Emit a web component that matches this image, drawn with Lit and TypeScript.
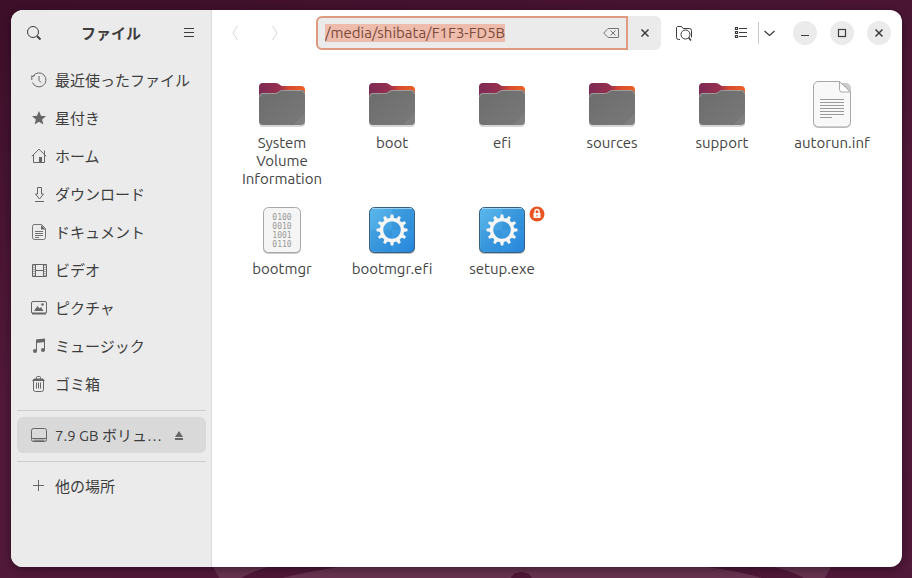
import { LitElement, html, svg, css } from "lit";
import { customElement, query } from "lit/decorators.js";

const icons = {
  search: svg`<circle cx="7" cy="7" r="5.500"/><path d="M11 11l3.500 3.500" stroke-width="1.800"/>`,
  menu: svg`<path d="M4 3.500h10M4 7.500h10M4 11.500h10" stroke-width="1.200"/>`,
  recent: svg`<path d="M2.200 3.900A7 7 0 1 1 1.500 10.600M.8 8V3.500M1 4.500l3-1"/><path d="M8 4v4.500l2 2"/>`,
  star: svg`<path class="solid" d="M8 1l2 4.800 5 .4-3.900 3.300 1.300 5.100L8 11.800l-4.400 2.800 1.300-5.100L1 6.200l5-.4z"/>`,
  home: svg`<path d="M.8 8.300L8 1.200l7.300 7.100M2.500 7v7.500h11V7M13.500 2.500v4"/><path class="solid" d="M8 9h3v5H8z"/>`,
  download: svg`<path d="M6.500 1.500h4v6.500h2L8.500 13 4.500 8h2zM4 15.500h9"/>`,
  document: svg`<path d="M3 .5h7.500l4 4v9a2 2 0 0 1-2 2H3.500a2 2 0 0 1-2-2V2.500A2 2 0 0 1 3 .5M4 7.500h8M4 9.500h8M4 11.500h8M4 13.500h4" stroke-width=".9"/><path class="solid" d="M10 1v4.500h4.500z"/>`,
  video: svg`<path d="M1.500 2.500h14v12h-14zM4.500 2.500v12M12.500 2.500v12M4.500 8.500h8"/><path d="M3 3v12M14 3v12" stroke-dasharray="1 1"/>`,
  picture: svg`<rect x=".5" y="1.500" width="15" height="12" rx="1.500"/><path class="solid" d="M3 11l3.500-5 2 2.500L10 7l2.500 4z"/><circle class="solid" cx="11.500" cy="4.500" r="1.300"/><path d="M1 13.500h14" stroke-width="2"/>`,
  music: svg`<path d="M5.500 13V2.500l8-1V11.500"/><path class="solid" d="M5 1.500L14 .5v3.500l-9 1z"/><circle class="solid" cx="4" cy="13" r="2"/><circle class="solid" cx="12" cy="12" r="2"/>`,
  trash: svg`<path d="M2.500 4.500v9a2 2 0 0 0 2 2h6a2 2 0 0 0 2-2v-9M5.500 6.500v6M7.500 6.500v6M9.500 6.500v6"/><path d="M5.500 3V1.500q0-1 1-1h2q1 0 1 1V3"/><path class="solid" d="M3 2.500h9l2 2.500H1z"/>`,
  drive: svg`<rect x=".5" y="1.500" width="15" height="13" rx="2"/><path d="M.5 11.500h15M2.500 13.200h11"/>`,
  plus: svg`<path d="M7.500 2v11M2 7.500h11"/>`,
  eject: svg`<path class="solid" d="M7 4l4 6H3zM3 11h8v2H3z"/>`,
  back: svg`<path d="M10.500 1L6 8l4.500 7"/>`,
  forward: svg`<path d="M5.500 1L10 8l-4.500 7"/>`,
  clear: svg`<path d="M5 3.500h10.500v9H5L.8 8zM7.500 5.500l5 5M12.500 5.500l-5 5"/>`,
  close: svg`<path d="M4.500 4.500l7 7M11.500 4.500l-7 7" stroke-width="1.500"/>`,
  folderSearch: svg`<path d="M4 14.500H2.500a2 2 0 0 1-2-2V2.500l1-1h4l1.500 2h6.500a2 2 0 0 1 2 2v7"/><circle cx="9.500" cy="9.500" r="4.500"/><path d="M12.500 12.500l2.500 3" stroke-width="1.500"/>`,
  list: svg`<path d="M2.500 2.500h2v2h-2zM2.500 6.500h2v2h-2zM2.500 10.500h2v2h-2z" stroke-width="1.200"/><path d="M6 3.500h8M6 7.500h8M6 11.500h8" stroke-width="1.200"/>`,
  chevron: svg`<path d="M2.500 6L7.500 10.500 12.500 6" stroke-width="1.300"/>`,
  minimize: svg`<path d="M4 10.500h8"/>`,
  maximize: svg`<rect x="4.500" y="4.500" width="7" height="7" stroke-width="1.200"/>`,
};

type IconName = keyof typeof icons;

const icon = (name: IconName) =>
  html`<svg class="icon" viewBox="0 0 16 16" aria-hidden="true">${icons[name]}</svg>`;

const teeth = Array.from({ length: 12 }, (_, i) => i * 30);

const pictures = {
  folder: svg`
    <defs>
      <linearGradient id="back"><stop offset="0" stop-color="#7c2a55"/><stop offset=".45" stop-color="#97304e"/><stop offset=".65" stop-color="#d64a30"/><stop offset="1" stop-color="#ec6224"/></linearGradient>
      <linearGradient id="front" x1="0" y1="0" x2="1" y2="1"><stop offset="0" stop-color="#6c6c6c"/><stop offset="1" stop-color="#797979"/></linearGradient>
    </defs>
    <rect x="1" y="12" width="46" height="35" rx="4" fill="#000" opacity=".16"/>
    <path d="M1 7a4 4 0 0 1 4-4h13q2 0 3.500 1.500T25 6h18a4 4 0 0 1 4 4v12H1z" fill="url(#back)"/>
    <path d="M1 17a4 4 0 0 1 4-4h12q2 0 3.500-1.500T24 10h19a4 4 0 0 1 4 4v27a4 4 0 0 1-4 4H5a4 4 0 0 1-4-4z" fill="url(#front)"/>
    <path d="M1.500 17A3.500 3.500 0 0 1 5 13.500h12.500q2 0 3.500-1.500t3.500-1.500H43a3.500 3.500 0 0 1 3.500 3.500" fill="none" stroke="#a09a98"/>
    <path d="M47 33v8a4 4 0 0 1-4 4H35z" fill="#fff" opacity=".06"/>`,
  text: svg`
    <rect x="5" y="3" width="38" height="45" rx="5" fill="#000" opacity=".2"/>
    <path d="M10 1.500h21.500L42.500 12v30a5 5 0 0 1-5 5h-27a5 5 0 0 1-5-5V6a4.500 4.500 0 0 1 4.500-4.500z" fill="#f8f8f8" stroke="#a8a8a8"/>
    <path d="M31.500 1.500v8a2.500 2.500 0 0 0 2.500 2.500h8.500z" fill="#fff" stroke="#a8a8a8"/>
    <path d="M12 19.500h24M12 22.500h24M12 25.500h24M12 28.500h24M12 31.500h24M12 34.500h24M12 37.500h12" stroke="#999"/>`,
  binary: svg`
    <rect x="5" y="3" width="38" height="45" rx="5" fill="#000" opacity=".2"/>
    <rect x="5.500" y="1.500" width="37" height="45" rx="5" fill="#f5f5f5" stroke="#a8a8a8"/>
    <g class="digits"><text x="24" y="14">0100</text><text x="24" y="23">0010</text><text x="24" y="32">1001</text><text x="24" y="41">0110</text></g>`,
  program: svg`
    <defs>
      <linearGradient id="blue" x1="0" y1="0" x2="1" y2="1"><stop offset="0" stop-color="#5cb8ea"/><stop offset="1" stop-color="#2484da"/></linearGradient>
    </defs>
    <rect x="1" y="3" width="46" height="45" rx="5" fill="#000" opacity=".25"/>
    <rect x="1.500" y="1.500" width="45" height="45" rx="5" fill="url(#blue)" stroke="#355f80"/>
    <path d="M24 3h18a3 3 0 0 1 3 3v18H24zM3 24h21v21H6a3 3 0 0 1-3-3z" fill="#146fc0" opacity=".16"/>
    <path d="M4 2.500h40" stroke="#b6e0f8" opacity=".7"/>
    <circle cx="24" cy="24" r="10.500" fill="none" stroke="#f6f6f6" stroke-width="3.400"/>
    ${teeth.map((angle) => svg`<path d="M22 12.500l.8-4h2.400l.8 4z" fill="#f6f6f6" transform="rotate(${angle} 24 24)"/>`)}`,
};

interface Place { icon: IconName; label: string }
interface Item { picture: keyof typeof pictures; label: string; locked?: boolean }

const places: Place[] = [
  { icon: "recent", label: "最近使ったファイル" },
  { icon: "star", label: "星付き" },
  { icon: "home", label: "ホーム" },
  { icon: "download", label: "ダウンロード" },
  { icon: "document", label: "ドキュメント" },
  { icon: "video", label: "ビデオ" },
  { icon: "picture", label: "ピクチャ" },
  { icon: "music", label: "ミュージック" },
  { icon: "trash", label: "ゴミ箱" },
];

const items: Item[] = [
  { picture: "folder", label: "System Volume Information" },
  { picture: "folder", label: "boot" },
  { picture: "folder", label: "efi" },
  { picture: "folder", label: "sources" },
  { picture: "folder", label: "support" },
  { picture: "text", label: "autorun.inf" },
  { picture: "binary", label: "bootmgr" },
  { picture: "program", label: "bootmgr.efi" },
  { picture: "program", label: "setup.exe", locked: true },
];

@customElement("app-root")
export class AppRoot extends LitElement {
  @query(".path") private path!: HTMLInputElement;

  static styles = css`
    :host {
      display: block;
      position: relative;
      box-sizing: border-box;
      min-height: 100vh;
      padding: 10px 10px 11px 11px;
      overflow: hidden;
      background: linear-gradient(165deg, #3d0f29, #52193a 50%, #501839);
      color: #3d3d3d;
      font: 15px/18px Ubuntu, "Noto Sans", "Noto Sans CJK JP", sans-serif;
      font-variant-ligatures: none;
    }
    * { box-sizing: border-box; }
    button {
      display: flex;
      align-items: center;
      justify-content: center;
      flex: none;
      margin: 0;
      padding: 0;
      border: 0;
      background: none;
      color: inherit;
      font: inherit;
    }
    .icon {
      flex: none;
      width: 16px;
      height: 16px;
      fill: none;
      stroke: currentColor;
    }
    .solid { fill: currentColor; stroke: none; }
    .wallpaper {
      position: absolute;
      bottom: 0;
      left: 0;
      width: 100%;
      height: 11px;
    }
    .window {
      position: relative;
      display: grid;
      grid-template-columns: 201px minmax(0, 1fr);
      min-height: calc(100vh - 21px);
      overflow: hidden;
      border-radius: 12px;
      background: #fff;
      box-shadow: 0 2px 8px #0006;
    }
    .sidebar {
      border-right: 1px solid #dadada;
      background: #ebebeb;
    }
    .bar {
      display: flex;
      align-items: center;
      height: 46px;
    }
    .sidebar .bar { justify-content: space-between; padding: 0 6px; }
    .tool { width: 34px; height: 34px; }
    .title { margin: 0; padding-top: 2px; font-size: 15px; font-weight: 700; }
    .places {
      display: flex;
      flex-direction: column;
      gap: 2px;
      padding: 0 5px 0 6px;
    }
    .places.first { padding-top: 6px; }
    .place {
      display: flex;
      align-items: center;
      gap: 8px;
      height: 36px;
      padding: 0 14px;
      border-radius: 6px;
      color: inherit;
      text-decoration: none;
      white-space: nowrap;
    }
    .place .icon { color: #666; }
    .place span { padding-top: 2px; }
    .volume { background: #d9d9d9; padding: 0 18px 0 14px; }
    .volume a {
      display: flex;
      flex: 1;
      align-items: center;
      gap: 8px;
      min-width: 0;
      color: inherit;
      text-decoration: none;
    }
    .rule { margin: 8px 5px 6px 6px; border: 0; border-top: 1px solid #cdcdcd; }
    .header { padding: 0 11px 0 6px; }
    .history { display: flex; gap: 6px; color: #d6d6d6; }
    .location {
      display: flex;
      flex: 1;
      height: 34px;
      margin: 0 6px 0 24px;
      border-radius: 6px;
      background: #ebebeb;
    }
    .entry {
      display: flex;
      flex: 1;
      align-items: center;
      min-width: 0;
      padding: 0 7px;
      border: 2px solid #e09a80;
      border-radius: 6px 0 0 6px;
    }
    .path {
      flex: 1;
      min-width: 0;
      padding: 0;
      border: 0;
      outline: 0;
      background: none;
      color: #7c4a3a;
      font: inherit;
    }
    .path::selection { background: #edbcad; color: #7c4a3a; }
    .erase { color: #777; }
    .dismiss { width: 33px; }
    .view {
      display: flex;
      align-items: center;
      margin: 0 13px 0 23px;
    }
    .view .more { width: 22px; height: 22px; border-left: 1px solid #c8c8c8; }
    .controls { display: flex; gap: 13px; }
    .controls button {
      width: 24px;
      height: 24px;
      border-radius: 50%;
      background: #ebebeb;
    }
    .files {
      display: grid;
      grid-template-columns: repeat(auto-fill, minmax(110px, 1fr));
      gap: 18px 0;
      margin: 0;
      padding: 24px 15px;
      color: #444;
      list-style: none;
    }
    .file {
      position: relative;
      display: flex;
      flex-direction: column;
      align-items: center;
      gap: 6px;
      padding: 0 12px;
      text-align: center;
    }
    .picture { width: 48px; height: 48px; }
    .digits {
      fill: #999;
      font: 8px "DejaVu Sans Mono", monospace;
      text-anchor: middle;
    }
    .badge {
      position: absolute;
      top: 0;
      right: 12px;
      width: 16px;
      height: 16px;
    }
  `;

  firstUpdated() {
    this.path.focus();
    this.path.select();
  }

  render() {
    return html`
      <svg class="wallpaper" viewBox="0 0 912 11" preserveAspectRatio="none" aria-hidden="true">
        <path d="M213 0h618l-6 11H219z" fill="#66324f"/>
        <path d="M268 0h70q-32 5-56 11h-41q10-6 27-11zM708 0h66q20 5 30 11h-42q-20-6-54-11z" fill="#4f1737"/>
        <path d="M511 11q2-6 10-6t11 6z" fill="#4f1737"/>
      </svg>
      <div class="window">
        <nav class="sidebar" aria-label="場所">
          <div class="bar">
            <button class="tool" aria-label="検索">${icon("search")}</button>
            <h1 class="title">ファイル</h1>
            <button class="tool" aria-label="メニュー">${icon("menu")}</button>
          </div>
          <div class="places first">
            ${places.map((p) => html`<a class="place" href="#">${icon(p.icon)}<span>${p.label}</span></a>`)}
          </div>
          <hr class="rule" />
          <div class="places">
            <div class="place volume">
              <a href="#">${icon("drive")}<span>7.9 GB ボリュ…</span></a>
              <button aria-label="取り出す">${icon("eject")}</button>
            </div>
          </div>
          <hr class="rule" />
          <div class="places">
            <a class="place" href="#">${icon("plus")}<span>他の場所</span></a>
          </div>
        </nav>
        <main>
          <header class="bar header">
            <div class="history">
              <button class="tool" aria-label="戻る" disabled>${icon("back")}</button>
              <button class="tool" aria-label="進む" disabled>${icon("forward")}</button>
            </div>
            <div class="location">
              <div class="entry">
                <input class="path" type="text" aria-label="場所" spellcheck="false" .value=${"/media/shibata/F1F3-FD5B"} />
                <button class="erase" aria-label="消去">${icon("clear")}</button>
              </div>
              <button class="dismiss" aria-label="キャンセル">${icon("close")}</button>
            </div>
            <button class="tool" aria-label="フォルダー内を検索">${icon("folderSearch")}</button>
            <div class="view">
              <button class="tool" aria-label="リスト表示">${icon("list")}</button>
              <button class="more" aria-label="表示オプション">${icon("chevron")}</button>
            </div>
            <div class="controls">
              <button aria-label="最小化">${icon("minimize")}</button>
              <button aria-label="最大化">${icon("maximize")}</button>
              <button aria-label="閉じる">${icon("close")}</button>
            </div>
          </header>
          <ul class="files">
            ${items.map((item) => html`
              <li class="file">
                <svg class="picture" viewBox="0 0 48 48" aria-hidden="true">${pictures[item.picture]}</svg>
                <span>${item.label}</span>
                ${item.locked
                  ? html`<svg class="badge" viewBox="0 0 16 16" role="img" aria-label="ロック">
                      <circle cx="8" cy="8" r="7.500" fill="#e95420"/>
                      <path d="M4.500 7h7v5h-7z" fill="#fff"/>
                      <path d="M6 7V5.500a2 2 0 0 1 4 0V7" fill="none" stroke="#fff" stroke-width="1.400"/>
                      <path d="M8 8.500v2" stroke="#e95420"/>
                    </svg>`
                  : ""}
              </li>`)}
          </ul>
        </main>
      </div>`;
  }
}
